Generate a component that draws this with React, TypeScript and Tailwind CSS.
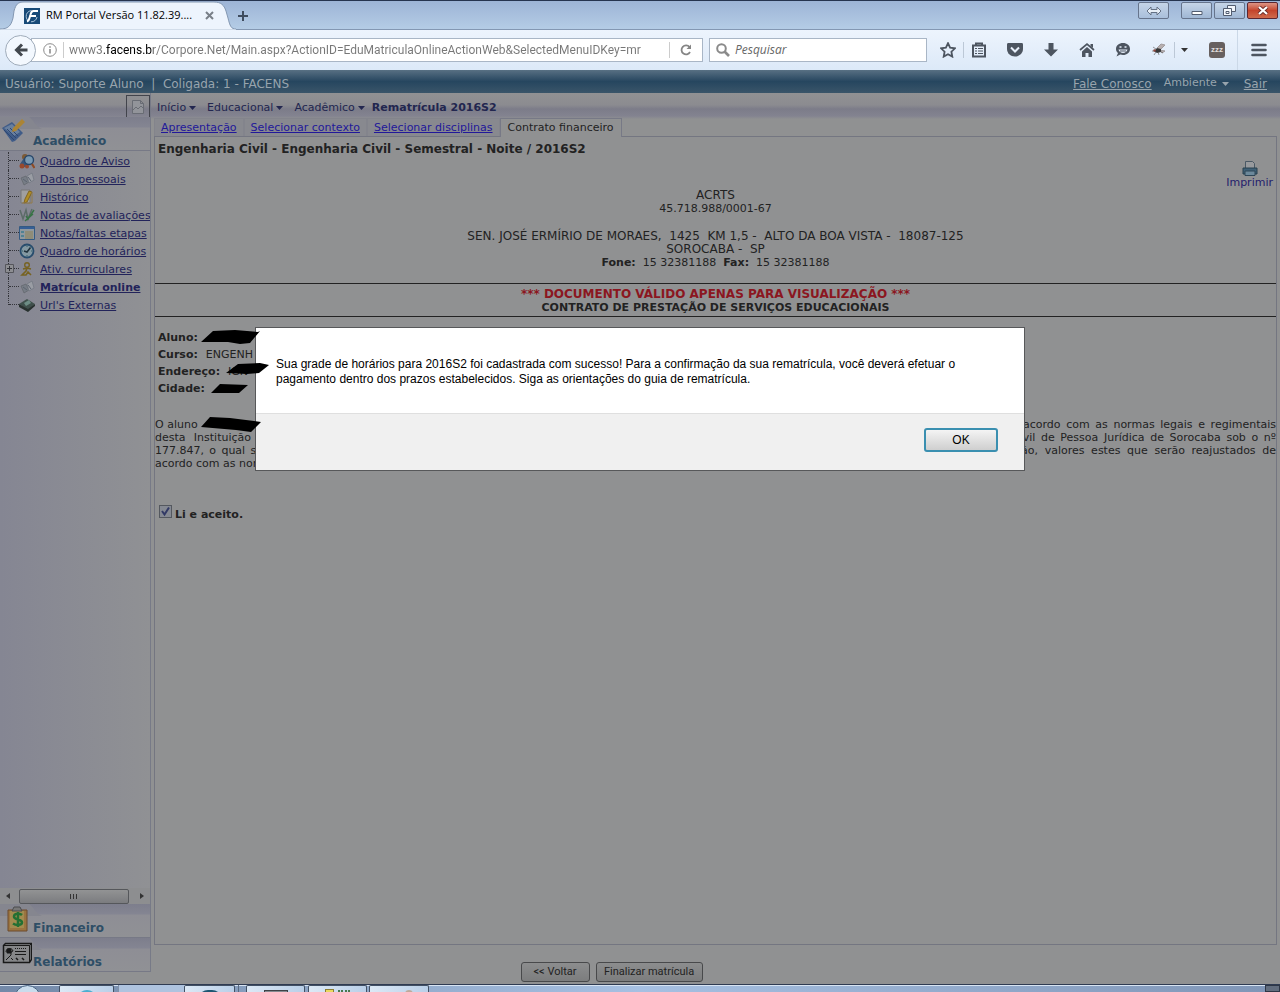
import { useState, type ReactNode } from "react";

const menuItems = [
  { label: "Quadro de Aviso", icon: "board" },
  { label: "Dados pessoais", icon: "cards" },
  { label: "Histórico", icon: "history" },
  { label: "Notas de avaliações", icon: "grades" },
  { label: "Notas/faltas etapas", icon: "table" },
  { label: "Quadro de horários", icon: "clock" },
  { label: "Ativ. curriculares", icon: "person", expandable: true },
  { label: "Matrícula online", icon: "cards", active: true },
  { label: "Url's Externas", icon: "book" },
];

function MenuIcon({ name }: { name: string }) {
  return (
    <svg viewBox="0 0 16 16" className="h-4 w-4 shrink-0" fill="none">
      {name === "board" && (
        <>
          <circle cx="6" cy="4" r="3" fill="#7c5a35" />
          <path d="M1 11l4-6 6 4-3 5H2z" fill="#38577c" />
          <circle cx="3" cy="13" r="2.5" fill="#984a2e" />
          <circle cx="8" cy="13.500" r="2" fill="#984a2e" />
          <circle cx="10" cy="7" r="4.5" fill="#7999b2" stroke="#29486b" strokeWidth="1.4" />
          <path d="M13 11l2.5 4" stroke="#8e4b25" strokeWidth="2.2" />
        </>
      )}
      {name === "cards" && (
        <>
          <path d="M2 7l5-2 3 6-5 3z" fill="#777d86" stroke="#62666c" strokeWidth=".7" />
          <path d="M8 5l5-3 2 7-5 3z" fill="#9a9da4" stroke="#707680" strokeWidth=".7" />
          <path d="M4 8l4 3M9 6l3 4" stroke="#5c6370" />
        </>
      )}
      {name === "history" && (
        <>
          <path d="M2 1h9v13H2z" fill="#a0a0a0" stroke="#777" />
          <path d="M10 2l3 1-5 10-3 1 1-4z" fill="#b18e26" stroke="#806520" />
          <path d="M13 3v11H3" stroke="#927a4b" />
        </>
      )}
      {name === "grades" && (
        <>
          <path d="M1 3l3 9 3-9 2 9 4-10" stroke="#5c6b68" strokeWidth="1.5" />
          <path d="M7 9l2 3 6-9M6 14l8-7" stroke="#387346" strokeWidth="1.5" />
        </>
      )}
      {name === "table" && (
        <>
          <path d="M.5 1.5h15v13H.5z" fill="#8f989e" stroke="#345a82" />
          <path d="M1 2h14v2H1z" fill="#365f96" />
          <path d="M2 6h3v2H2zm0 4h3v2H2z" fill="#4f8294" />
          <path d="M6 7h8M6 9h8M6 11h8M6 13h8" stroke="#8e8053" />
        </>
      )}
      {name === "clock" && (
        <>
          <circle cx="8" cy="8" r="6.5" fill="#8398a2" stroke="#284d6d" strokeWidth="1.8" />
          <path d="M11.500 4.500L8 9 5 8" stroke="#20323c" strokeWidth="1.5" />
          <path d="M8 3v1M3 8h1M8 12v1M12 8h1" stroke="#37626a" />
        </>
      )}
      {name === "person" && (
        <>
          <circle cx="8" cy="4" r="2.3" stroke="#776322" strokeWidth="1.4" />
          <path d="M4 8l4-1 4 1M8 7l-1 3-4 4h4l2-3 3 3" stroke="#776322" strokeWidth="1.6" />
        </>
      )}
      {name === "book" && (
        <>
          <path d="M0 7l8-5 8 5-7 6z" fill="#3f504c" />
          <path d="M0 7v3l9 5 7-6V7l-7 5z" fill="#28312f" />
          <path d="M5 6l5-3 2 3-5 3z" fill="#6d8d85" />
        </>
      )}
    </svg>
  );
}

function Caret() {
  return (
    <svg viewBox="0 0 7 4" className="h-1 w-[7px]">
      <path d="M0 0h7L3.5 4z" fill="currentColor" />
    </svg>
  );
}

function ToolbarIcon({ label, children }: { label: string; children: ReactNode }) {
  return (
    <button aria-label={label} className="flex h-5 w-5 items-center justify-center text-[#4d5560]">
      <svg viewBox="0 0 16 16" className="h-4 w-4" fill="none" stroke="currentColor">
        {children}
      </svg>
    </button>
  );
}

function TabBar() {
  const frame = "flex h-[17px] items-center justify-center rounded-xs border border-[#66748c]";
  return (
    <div className="flex h-[30px] justify-between border-t border-[#26344f] bg-linear-to-b from-[#9db4d6] to-[#b5cde6] shadow-[inset_0_-1px_0_#8397b2]">
      <div className="flex">
        <div className="relative h-[29px] w-[236px]">
          <svg viewBox="0 0 236 29" className="absolute inset-0 h-full w-full">
            <path d="M0 28C8 28 11 25 13 17l1-7C16 3 18 1 24 1h190c7 0 10 3 12 9l2 7c2 8 3 11 8 11v1H0z" fill="#edf4fd" stroke="#8397b2" />
            <path d="M0 29h236" stroke="#edf4fd" strokeWidth="1" />
          </svg>
          <div className="relative flex h-full items-center pl-6">
            <svg viewBox="0 0 16 16" className="h-4 w-4" fill="none">
              <path d="M0 0h16v16H0z" fill="#174a78" />
              <path d="M7.500 2.500C4 3 2 5.500 2.200 8.500c.1 2 1 3.500 2.300 4.500" stroke="#a9c3da" />
              <path d="M14 3H9.500C7.500 3 7 4.500 6.500 6.500L5.500 10c-.3 1.500-1 3-2.500 3.500" stroke="#fff" strokeWidth="2" />
              <path d="M6 8h6" stroke="#fff" strokeWidth="2" />
              <path d="M13 9c-.5 3-3 5-6 4.800" stroke="#a9c3da" />
            </svg>
            <span className="ml-[6px] w-[150px] overflow-hidden font-['Open_Sans',sans-serif] text-[11px] whitespace-nowrap text-black">
              RM Portal Versão 11.82.39....
            </span>
            <button aria-label="Fechar aba" className="ml-[9px]">
              <svg viewBox="0 0 9 9" className="h-[9px] w-[9px]" stroke="#787f88" strokeWidth="2">
                <path d="M1 1l7 7M8 1L1 8" />
              </svg>
            </button>
          </div>
        </div>
        <button aria-label="Nova aba" className="ml-[2px]">
          <svg viewBox="0 0 10 10" className="h-[10px] w-[10px]" stroke="#3f4c5e" strokeWidth="2">
            <path d="M5 0v10M0 5h10" />
          </svg>
        </button>
      </div>
      <div className="flex items-start pt-px pr-[2px]">
        <button aria-label="Mover janela" className={`${frame} mr-3 w-[31px] bg-linear-to-b from-[#c5d5e8] to-[#a9bfdb]`}>
          <svg viewBox="0 0 16 10" className="h-[10px] w-4" fill="#e7eef6" stroke="#647184">
            <path d="M1 5l4-4v2.5h6V1l4 4-4 4V6.500H5V9z" />
          </svg>
        </button>
        <button aria-label="Minimizar" className={`${frame} mr-[2px] w-[31px] bg-linear-to-b from-[#c5d5e8] to-[#a0b7d4]`}>
          <svg viewBox="0 0 12 10" className="h-[10px] w-3">
            <path d="M1 5.500h10v3H1z" fill="#fff" stroke="#525d70" />
          </svg>
        </button>
        <button aria-label="Restaurar" className={`${frame} mr-[2px] w-[31px] bg-linear-to-b from-[#c5d5e8] to-[#a0b7d4]`}>
          <svg viewBox="0 0 13 11" className="h-[11px] w-[13px]" fill="#f2f6fb" stroke="#525d70">
            <path d="M4.500.5h8v6h-8z" />
            <path d="M.5 3.500h8v7h-8zM3 6.500h3v2H3z" />
          </svg>
        </button>
        <button aria-label="Fechar" className="flex h-[17px] w-[31px] items-center justify-center rounded-xs border border-[#5c2630] bg-linear-to-b from-[#dc9384] via-[#c4442c] to-[#cf6a4c]">
          <svg viewBox="0 0 12 9" className="h-[9px] w-3" fill="none">
            <path d="M2 1l8 7M10 1L2 8" stroke="#6c2d2a" strokeWidth="4" />
            <path d="M2 1l8 7M10 1L2 8" stroke="#fff" strokeWidth="2.200" />
          </svg>
        </button>
      </div>
    </div>
  );
}

function NavBar() {
  return (
    <div className="flex h-10 items-center bg-linear-to-b from-[#edf4fd] to-[#dce9f8] pr-[13px] pl-[5px]">
      <button aria-label="Voltar página" className="z-10 flex h-[31px] w-[31px] shrink-0 items-center justify-center rounded-full border border-[#a0acba] bg-[#f3f8fe]">
        <svg viewBox="0 0 14 14" className="h-[14px] w-[14px]" fill="none" stroke="#43484f" strokeWidth="3">
          <path d="M13.500 7H3M8 1.500L2.500 7 8 12.500" />
        </svg>
      </button>
      <div className="-ml-[5px] flex h-6 min-w-0 flex-1 items-center border border-[#a9b6c6] bg-white pl-[11px]">
        <svg viewBox="0 0 14 14" className="h-[14px] w-[14px] shrink-0" fill="none" stroke="#8c8c8c">
          <circle cx="7" cy="7" r="6.300" />
          <path d="M7 6v4.500M7 3.200v1.600" strokeWidth="1.600" />
        </svg>
        <span className="ml-[6px] h-4 w-px bg-[#ccc]" />
        <input
          aria-label="Endereço do site"
          defaultValue="www3.facens.br/Corpore.Net/Main.aspx?ActionID=EduMatriculaOnlineActionWeb&SelectedMenuIDKey=mr"
          className="ml-[5px] min-w-0 flex-1 bg-[linear-gradient(90deg,#777_35px,#000_35px,#000_84px,#777_84px)] bg-clip-text font-['Roboto',sans-serif] text-[12px] text-transparent outline-none"
        />
        <button aria-label="Recarregar" className="flex h-4 w-[33px] items-center justify-center border-l border-[#ccc]">
          <svg viewBox="0 0 12 12" className="h-3 w-3" fill="none" stroke="#858585" strokeWidth="1.800">
            <path d="M9.500 3A4.500 4.500 0 1 0 10 8" />
            <path d="M11 .5V5H6.500z" fill="#858585" stroke="none" />
          </svg>
        </button>
      </div>
      <div className="ml-[6px] flex h-6 w-[218px] items-center border border-[#a9b6c6] bg-white pl-[6px]">
        <svg viewBox="0 0 14 14" className="h-[14px] w-[14px]" fill="none" stroke="#8a8a8a">
          <circle cx="5.500" cy="5.500" r="4.300" strokeWidth="2" />
          <path d="M8.500 8.500L13 13" strokeWidth="2.600" />
        </svg>
        <input
          aria-label="Pesquisar"
          placeholder="Pesquisar"
          className="ml-[5px] min-w-0 flex-1 font-['Open_Sans',sans-serif] text-[12px] italic outline-none placeholder:text-[#666]"
        />
      </div>
      <div className="ml-[11px] flex items-center">
        <ToolbarIcon label="Favoritar">
          <path d="M8 1.200l2.100 4.500 4.900.6-3.600 3.400.9 4.900L8 12.200l-4.300 2.400.9-4.900L1 6.300l4.900-.6z" strokeWidth="1.800" />
        </ToolbarIcon>
        <span className="ml-[5px] h-4 w-px bg-[#bcc8d6]" />
        <div className="ml-[5px] flex gap-4">
          <ToolbarIcon label="Favoritos">
            <path d="M2 3.500h12v11H2z" strokeWidth="2" />
            <path d="M5 3V1.500h6V3" strokeWidth="2" />
            <path d="M4 6.500h2M7 6.500h5M4 9h2M7 9h5M4 11.500h2M7 11.500h5" strokeWidth="1.200" />
          </ToolbarIcon>
          <ToolbarIcon label="Pocket">
            <path d="M1.500 1h13C15.500 1 16 1.500 16 2.500V7c0 4-3.500 7.500-8 7.500S0 11 0 7V2.500C0 1.500.5 1 1.500 1z" fill="currentColor" stroke="none" />
            <path d="M4 5.500l4 4 4-4" stroke="#e8f0fa" strokeWidth="2" />
          </ToolbarIcon>
          <ToolbarIcon label="Downloads">
            <path d="M5.500 1h5v6.500H15l-7 7-7-7h4.500z" fill="currentColor" stroke="none" />
          </ToolbarIcon>
          <ToolbarIcon label="Página inicial">
            <path d="M1 8l7-6 7 6" strokeWidth="1.700" />
            <path d="M8 5l5 4.500V15H9.500v-4h-3v4H3V9.500zM11.500 2H14v4l-2.500-2z" fill="currentColor" stroke="none" />
          </ToolbarIcon>
          <ToolbarIcon label="Hello">
            <path d="M8 1c4 0 7 2.500 7 6s-3 6-7 6c-1 0-2-.2-2.800-.5L1.500 14.500 3 11C1.700 10 1 8.700 1 7c0-3.500 3-6 7-6z" fill="currentColor" stroke="none" />
            <path d="M3.500 7.500h9C11.500 12 4.500 12 3.500 7.500z" fill="#e5eef9" stroke="none" />
            <path d="M5 9h6" />
            <path d="M4.500 5h2M9.500 5h2" stroke="#e5eef9" strokeWidth="1.500" />
          </ToolbarIcon>
          <ToolbarIcon label="Firebug">
            <path d="M6 6l4-4 4 1-5 5M8 8l6 1-3 2z" fill="#b8b0b0" stroke="#a19c9e" />
            <path d="M3 9l3-3 4 1v3l-4 1z" fill="#373737" stroke="none" />
            <path d="M5 7L2 5M4 9H1M5 10l-2 3M7 10l1 3M9 9l3 2" stroke="#555" strokeWidth=".6" />
            <circle cx="3.500" cy="8.500" r="1.200" fill="#8e473f" stroke="none" />
          </ToolbarIcon>
        </div>
        <button aria-label="Opções do Firebug" className="ml-[5px] flex h-4 w-5 items-center justify-center border-l border-[#bcc8d6] text-[#333]">
          <Caret />
        </button>
        <button aria-label="Suspender" className="ml-[15px] h-4 w-4 rounded-[3px] bg-[#67605f] text-center font-['Liberation_Sans',sans-serif] text-[8px] leading-4 font-bold text-[#e0dddd]">
          zzz
        </button>
        <span className="ml-[12px] h-10 w-px bg-[#cbd8e7]" />
        <button aria-label="Abrir menu" className="ml-[13px]">
          <svg viewBox="0 0 16 14" className="h-[14px] w-4" stroke="#4d5560" strokeWidth="2.600" strokeLinecap="round">
            <path d="M1.500 2h13M1.500 7h13M1.500 12h13" />
          </svg>
        </button>
      </div>
    </div>
  );
}

function SectionHeader({ title, icon }: { title: string; icon: ReactNode }) {
  return (
    <div className="relative flex h-[34px] items-end border-b border-[#777986] bg-[linear-gradient(180deg,#7d7e8c_0px,#848592_10px,#8e8e95_11px,#909195_100%)]">
      <svg viewBox="0 0 50 12" className="absolute top-0 left-0 h-3 w-[50px]">
        <path d="M0 0h29c4 2 5 8 13 12H0z" fill="#85868f" />
      </svg>
      <span className="absolute top-[2px] left-[2px]">{icon}</span>
      <a href="#" className="pl-[33px] text-[12px] leading-[18px] font-bold text-[#2e4e66]">
        {title}
      </a>
    </div>
  );
}

function Sidebar() {
  return (
    <aside className="mb-3 flex w-[151px] shrink-0 flex-col overflow-hidden border-r border-[#777a87]">
      <div className="flex h-6 justify-end pt-[2px]">
        <button aria-label="Recolher menu" className="flex h-6 w-6 items-center justify-center border border-[#42444c]">
          <svg viewBox="0 0 14 16" className="h-4 w-[14px]" fill="#92949a" stroke="#696c74">
            <path d="M1.500 1.500h8l3 3v10h-11zM9.500 1.500v3h3" />
            <path d="M2 11l3-3 2 2 3-3 2 2" />
          </svg>
        </button>
      </div>
      <SectionHeader
        title="Acadêmico"
        icon={
          <svg viewBox="0 0 24 24" className="h-6 w-6">
            <path d="M0 9l10-6 11 11-8 8-3 1z" fill="#405c88" />
            <path d="M2 9l8-4 8 8-6 4z" fill="#687f9e" />
            <path d="M2 11l10 10M5 10l9 9M8 9l8 8" stroke="#2d4671" />
            <path d="M20 0l3 3-9 9-4 1 1-4z" fill="#ab8435" />
          </svg>
        }
      />
      <ul className="flex-1 bg-linear-to-r from-[#858693] to-[#909194] pt-px">
        {menuItems.map((item, i) => (
          <li key={item.label} className="relative flex h-[18px] items-center">
            <span
              className={`ml-2 w-[11px] shrink-0 border-l border-dotted border-[#33343a] ${
                i === menuItems.length - 1 ? "h-[9px] self-start" : "h-[18px]"
              }`}
            >
              <span className="block h-[9px] border-b border-dotted border-[#33343a]" />
            </span>
            {item.expandable && (
              <button aria-label="Expandir" className="absolute top-1 left-[5px]">
                <svg viewBox="0 0 9 9" className="h-[9px] w-[9px]" stroke="#33343a">
                  <path d="M.5.5h8v8h-8z" fill="#8d8e92" stroke="#55565c" />
                  <path d="M2 4.500h5M4.500 2v5" />
                </svg>
              </button>
            )}
            <MenuIcon name={item.icon} />
            <a
              href="#"
              className={`ml-[5px] flex-1 overflow-hidden pt-px text-[11px] leading-4 whitespace-nowrap text-[#22235a] underline ${
                item.active ? "font-bold" : ""
              }`}
            >
              {item.label}
            </a>
          </li>
        ))}
      </ul>
      <div className="flex h-4 items-center justify-between bg-[#8d8e90] px-[6px] text-[#333]">
        <svg viewBox="0 0 4 6" className="h-[6px] w-1">
          <path d="M4 0v6L0 3z" fill="currentColor" />
        </svg>
        <div className="mr-[3px] flex h-[15px] w-[110px] items-center justify-center gap-[2px] rounded-xs border border-[#55575b] bg-linear-to-b from-[#929394] to-[#7b7c7f]">
          <span className="h-[5px] w-px bg-[#333]" />
          <span className="h-[5px] w-px bg-[#333]" />
          <span className="h-[5px] w-px bg-[#333]" />
        </div>
        <svg viewBox="0 0 4 6" className="h-[6px] w-1">
          <path d="M0 0v6l4-3z" fill="currentColor" />
        </svg>
      </div>
      <SectionHeader
        title="Financeiro"
        icon={
          <svg viewBox="0 0 30 26" className="h-[26px] w-[30px]">
            <path d="M6 4h19v21H6z" fill="#9a7440" stroke="#6c4b2d" />
            <path d="M8 5h14v17H8z" fill="#a28b4f" />
            <path d="M10 5l2-4h6l2 4z" fill="#777" stroke="#4b4c4e" />
            <path d="M20 9c-2-2-8-2-8 1.500 0 4 8 2 8 6 0 3-6 3-9 1M16 6v15" stroke="#247033" strokeWidth="2.500" fill="none" />
          </svg>
        }
      />
      <SectionHeader
        title="Relatórios"
        icon={
          <svg viewBox="0 0 30 26" className="h-[26px] w-[30px]" fill="none" stroke="#191919">
            <path d="M1.500 5.500l2-2h26v16l-2 3h-26z" fill="#858688" strokeWidth="1.500" />
            <path d="M1.500 5.500h26v17M27.500 5.500l2-2" />
            <path d="M4 12c0-4 6-5 7-1l-2 1v3l-2 2-3 3M9 18l2 2" />
            <path d="M5 9h4v4H5z" fill="#191919" />
            <path d="M13 8.500h11" strokeDasharray="1 1" />
            <path d="M13 11.500h11M13 14.500h11" />
            <path d="M14 18l2 2M20 18l2 2" strokeWidth="1.500" />
          </svg>
        }
      />
    </aside>
  );
}

function Contract() {
  const [accepted, setAccepted] = useState(true);
  const fields = [
    { label: "Aluno:", value: "" },
    { label: "Curso:", value: "ENGENH" },
    { label: "Endereço:", value: "IGN" },
    { label: "Cidade:", value: "" },
  ];

  return (
    <div className="flex-1 border border-t-0 border-[#747681] pt-[6px] leading-[13px]">
      <h1 className="pl-[3px] text-[12px] font-bold">Engenharia Civil - Engenharia Civil - Semestral - Noite / 2016S2</h1>
      <div className="flex justify-end pt-[5px] pr-[3px]">
        <a href="#" className="flex flex-col items-center leading-3 text-[#24206c]">
          <svg viewBox="0 0 16 16" className="h-4 w-4">
            <path d="M3.500.5h7l2 2v6h-9z" fill="#989a9d" stroke="#4b5965" />
            <path d="M1 7h14v6H1z" fill="#3f6077" stroke="#29404f" />
            <path d="M3 10h10v4.500H3z" fill="#6c899b" stroke="#2e4657" />
          </svg>
          Imprimir
        </a>
      </div>
      <div className="text-center text-[12px] whitespace-pre-wrap">
        <p>ACRTS</p>
        <p className="text-[11px]">45.718.988/0001-67</p>
        <p className="mt-[15px]">{"SEN. JOSÉ ERMÍRIO DE MORAES,  1425  KM 1,5 -  ALTO DA BOA VISTA -  18087-125"}</p>
        <p>{"SOROCABA -  SP"}</p>
        <p className="text-[11px]">
          <b>Fone:</b>
          {"  15 32381188  "}
          <b>Fax:</b>
          {"  15 32381188"}
        </p>
      </div>
      <div className="mt-[14px] border-y border-[#222] pt-1 pb-[2px] text-center font-bold">
        <p className="text-[12px] text-[#8b1620]">*** DOCUMENTO VÁLIDO APENAS PARA VISUALIZAÇÃO ***</p>
        <h2>CONTRATO DE PRESTAÇÃO DE SERVIÇOS EDUCACIONAIS</h2>
      </div>
      <dl className="mt-3 pl-[3px] leading-[17px]">
        {fields.map((f) => (
          <div key={f.label} className="flex gap-2">
            <dt className="font-bold">{f.label}</dt>
            <dd>{f.value}</dd>
          </div>
        ))}
      </dl>
      <div className="mt-[21px] whitespace-nowrap">
        <div className="flex justify-between">
          <span>O aluno</span>
          <span className="w-[253px] [text-align-last:justify]">acordo com as normas legais e regimentais</span>
        </div>
        <div className="flex justify-between">
          <span className="w-[96px] [text-align-last:justify]">desta Instituição</span>
          <span className="w-[264px] [text-align-last:justify]">Civil de Pessoa Jurídica de Sorocaba sob o nº</span>
        </div>
        <div className="flex justify-between">
          <span className="w-[108px] [text-align-last:justify]">177.847, o qual se</span>
          <span className="w-[261px] [text-align-last:justify]">ção, valores estes que serão reajustados de</span>
        </div>
        <p>acordo com as nor</p>
      </div>
      <label className="mt-[35px] flex w-fit items-start gap-[3px] pl-1">
        <span className="grid h-[13px] w-[13px]">
          <input
            type="checkbox"
            checked={accepted}
            onChange={(e) => setAccepted(e.target.checked)}
            className="col-start-1 row-start-1 h-[13px] w-[13px] appearance-none border border-[#54585f] bg-[#858992]"
          />
          {accepted && (
            <svg viewBox="0 0 13 13" className="pointer-events-none col-start-1 row-start-1" fill="none" stroke="#323a66" strokeWidth="2">
              <path d="M3 6l2.500 3.500L10 2.500" />
            </svg>
          )}
        </span>
        <span className="pt-[3px] font-bold">Li e aceito.</span>
      </label>
    </div>
  );
}

function Main() {
  const steps = ["Apresentação", "Selecionar contexto", "Selecionar disciplinas"];

  return (
    <main className="ml-[3px] flex min-w-0 flex-1 flex-col pr-[3px]">
      <nav className="flex h-[25px] items-center gap-[11px] pt-[5px] pl-[3px] text-[#22264f]">
        {["Início", "Educacional", "Acadêmico"].map((name) => (
          <button key={name} className="flex items-center gap-[3px]">
            {name}
            <Caret />
          </button>
        ))}
        <span className="-ml-1 font-bold">Rematrícula 2016S2</span>
      </nav>
      <div className="flex h-[19px] border-b border-[#747681]">
        {steps.map((name) => (
          <a key={name} href="#" className="border-x border-t border-[#83848c] bg-[#88898f] px-[6px] text-[11px] leading-[18px] text-[#22189a] underline">
            {name}
          </a>
        ))}
        <span className="-mb-px h-[19px] border-x border-t border-[#777986] bg-[#909192] px-[7px] leading-[18px]">Contrato financeiro</span>
      </div>
      <Contract />
      <div className="flex h-[39px] items-end justify-center gap-[6px] pr-52 pb-[2px] font-['Roboto',sans-serif] text-[11px]">
        <button className="h-5 w-[69px] rounded-[3px] border border-[#48494b] bg-linear-to-b from-[#8c8d8e] to-[#7c7d7e] leading-4">&lt;&lt; Voltar</button>
        <button className="h-5 w-[107px] rounded-[3px] border border-[#48494b] bg-linear-to-b from-[#8c8d8e] to-[#7c7d7e] leading-4">Finalizar matrícula</button>
      </div>
    </main>
  );
}

function ConfirmDialog() {
  return (
    <div role="alertdialog" aria-label="Aviso" className="absolute top-[257px] left-1/2 w-[770px] -translate-x-1/2 border border-[#57585a] bg-[#f0f0f0] font-['Liberation_Sans',sans-serif] text-[12px] leading-[15px] text-black">
      <p className="border-b border-[#dfdfdf] bg-white px-5 pt-[29px] pb-[26px]">
        Sua grade de horários para 2016S2 foi cadastrada com sucesso! Para a confirmação da sua rematrícula, você deverá efetuar o
        <br />
        pagamento dentro dos prazos estabelecidos. Siga as orientações do guia de rematrícula.
      </p>
      <div className="flex justify-end px-[26px] pt-[14px] pb-[18px]">
        <button className="h-6 w-[74px] rounded-[3px] border-2 border-[#3a8fb0] bg-linear-to-b from-[#f4f4f4] to-[#cfcfcf]">OK</button>
      </div>
    </div>
  );
}

// marker strokes hiding the student's personal data
function Redactions() {
  return (
    <svg viewBox="0 0 80 110" className="pointer-events-none absolute top-[256px] left-[196px] h-[110px] w-20">
      <path d="M5 16L17 5l22-1 23 2 2-1-10 12-10 1-12-2z" />
      <path d="M30 47l12-9 22-1 9 2-10 8-12 1z" />
      <path d="M15 67l9-9 28 1-9 8z" />
      <path d="M5 101l9-10 20 1 31 4-10 10-15-2z" />
    </svg>
  );
}

function Taskbar() {
  const item = "rounded-t-xs border-x border-t border-[#425064] bg-linear-to-r from-[#dce9f6] to-[#b9cfe8]";
  return (
    <footer className="flex h-2 overflow-hidden border-t border-[#2f3b52] bg-linear-to-r from-[#7389a8] via-[#a6c0e2] to-[#7f95b6] shadow-[inset_0_1px_0_#d8e4f2]">
      <div className="w-[59px]">
        <div className="ml-[14px] h-8 w-[27px] rounded-full border border-[#45617f] bg-[#c9dcec]" />
      </div>
      <div className={`${item} flex w-[55px] justify-center`}>
        <span className="mt-1 h-5 w-5 rounded-full bg-[#4baed0]" />
      </div>
      <div className="ml-1 w-[66px] border-l border-[#8191a8] bg-[#aec3df]" />
      <div className={`${item} flex w-[51px] justify-center`}>
        <span className="mt-1 h-5 w-6 rounded-full bg-[#1d5672]" />
      </div>
      <span className="ml-[3px] w-px bg-[#596a82]" />
      <div className={`${item} ml-[7px] flex w-[59px] justify-center`}>
        <span className="mt-1 h-5 w-6 border border-[#3e4247] bg-[#858a90]" />
      </div>
      <div className={`${item} ml-[3px] flex w-[59px] justify-center gap-1`}>
        <span className="mt-[3px] h-5 w-[9px] border border-[#8b7c35] bg-[#ead85d]" />
        <span className="mt-1 h-0 w-3 border-t-2 border-dotted border-[#49794f]" />
      </div>
      <div className={`${item} ml-[2px] flex w-[60px] justify-center`}>
        <span className="mt-1 ml-5 h-4 w-2 rounded-full bg-[#bea99a]" />
      </div>
      <div className="ml-auto w-[15px] border border-[#2e3747] bg-[#626d7e]" />
    </footer>
  );
}

export default function App() {
  return (
    <div className="flex min-h-screen flex-col">
      <header>
        <TabBar />
        <NavBar />
      </header>
      <div className="relative flex flex-1 flex-col bg-[#909192] font-['DejaVu_Sans',sans-serif] text-[11px] text-[#222]">
        <div className="flex h-[23px] items-center justify-between bg-linear-to-b from-[#587083] via-[#26465f] to-[#3a5569] pt-1 pr-[13px] pl-[5px] text-[#98a4ad]">
          <p className="text-[12px] whitespace-pre">{"Usuário: Suporte Aluno  |  Coligada: 1 - FACENS"}</p>
          <div className="flex items-center gap-3">
            <a href="#" className="text-[12px] underline">Fale Conosco</a>
            <button className="flex items-center gap-[5px]">
              Ambiente
              <Caret />
            </button>
            <a href="#" className="ml-[3px] text-[12px] underline">Sair</a>
          </div>
        </div>
        <div className="flex flex-1 bg-[linear-gradient(180deg,#919193_0px,#8b8b90_12px,#7c7c89_16px,#838390_23px,#909192_26px)]">
          <Sidebar />
          <Main />
        </div>
        <ConfirmDialog />
        <Redactions />
      </div>
      <Taskbar />
    </div>
  );
}
